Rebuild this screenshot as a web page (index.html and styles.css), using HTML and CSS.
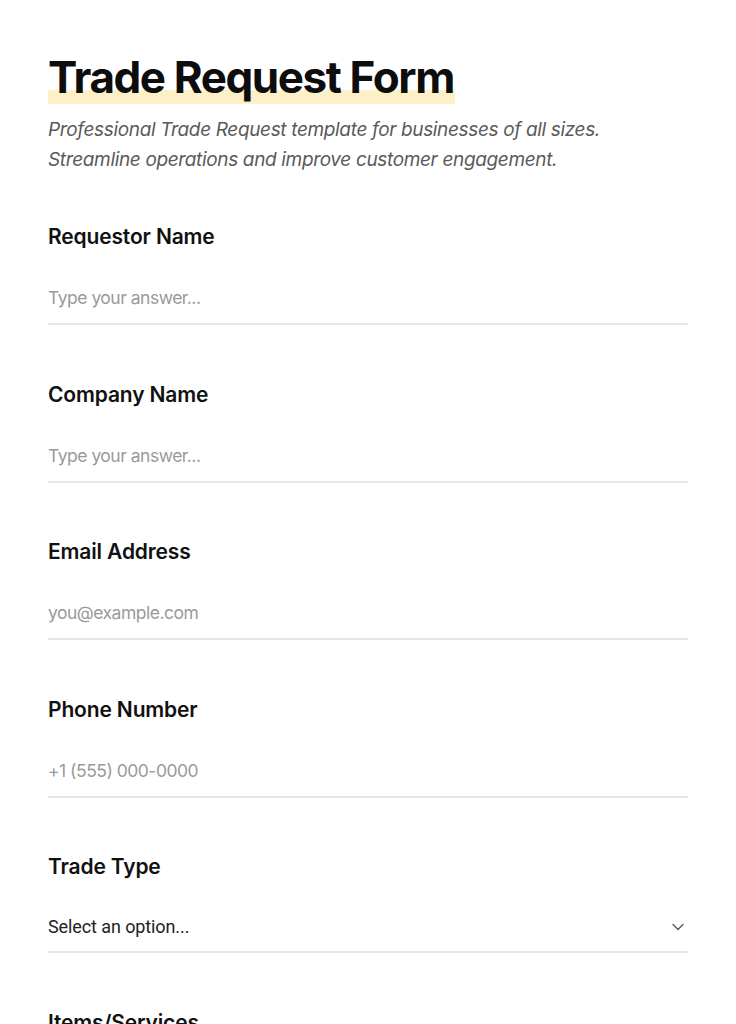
FILE: index.html
```html
<!DOCTYPE html>
<html lang="en">
<head>
<meta charset="utf-8">
<title>Trade Request Form</title>
<link rel="stylesheet" href="styles.css">
</head>
<body>
<main class="page">
  <header class="intro">
    <h1 class="title"><span class="title-mark">Trade Request Form</span></h1>
    <p class="subtitle">Professional Trade Request template for businesses of all sizes. Streamline operations and improve customer engagement.</p>
  </header>
  <form class="form">
    <div class="field">
      <label class="label">Requestor Name</label>
      <div class="input placeholder">Type your answer...</div>
    </div>
    <div class="field">
      <label class="label">Company Name</label>
      <div class="input placeholder">Type your answer...</div>
    </div>
    <div class="field">
      <label class="label">Email Address</label>
      <div class="input placeholder">you@example.com</div>
    </div>
    <div class="field">
      <label class="label">Phone Number</label>
      <div class="input placeholder">+1 (555) 000-0000</div>
    </div>
    <div class="field">
      <label class="label">Trade Type</label>
      <div class="input select">
        <span class="select-text">Select an option...</span>
        <svg class="chevron" width="12" height="8" viewBox="0 0 12 8"><path d="M1 1.5 L6 6.5 L11 1.5" fill="none" stroke="#555" stroke-width="1.3" stroke-linecap="round" stroke-linejoin="round"/></svg>
      </div>
    </div>
    <div class="field">
      <label class="label">Items/Services</label>
      <div class="input placeholder">Type your answer...</div>
    </div>
  </form>
</main>
</body>
</html>
```

FILE: styles.css
```css
html, body {
  margin: 0;
  padding: 0;
  background: #ffffff;
}
body {
  font-family: "Inter", "Noto Sans", sans-serif;
  color: #111111;
}
.page {
  padding: 51px 48px 40px;
  width: 640px;
}
.intro {
  display: flex;
  flex-direction: column;
  align-items: flex-start;
}
.title {
  margin: 0;
  font-size: 44px;
  line-height: 53px;
  font-weight: 700;
  letter-spacing: -1.4px;
  color: #0d0d0d;
}
.title-mark {
  display: inline-block;
  background: linear-gradient(to bottom, transparent 74%, #fdf0c6 74%);
  padding-right: 1px;
}
.subtitle {
  margin: 11px 0 0;
  font-size: 19px;
  line-height: 30px;
  font-style: italic;
  color: #5a5a5a;
  max-width: 580px;
  letter-spacing: -0.35px;
}
.form {
  margin-top: 47px;
  display: flex;
  flex-direction: column;
  gap: 54.5px;
}
.field {
  display: flex;
  flex-direction: column;
}
.label {
  font-size: 21px;
  line-height: 30px;
  font-weight: 600;
  letter-spacing: -0.15px;
  color: #111111;
}
.input {
  margin-top: 21px;
  padding: 12px 0;
  font-size: 17.5px;
  line-height: 26px;
  border-bottom: 2px solid #e6e6e6;
  letter-spacing: -0.5px;
}
.placeholder {
  color: #9a9a9a;
}
.select {
  padding: 11px 0;
  display: flex;
  justify-content: space-between;
  align-items: center;
  color: #222222;
}
.select-text {
  font-family: "Roboto", sans-serif;
  font-size: 18px;
  letter-spacing: -0.1px;
}
.chevron {
  margin-right: 4px;
}
```
